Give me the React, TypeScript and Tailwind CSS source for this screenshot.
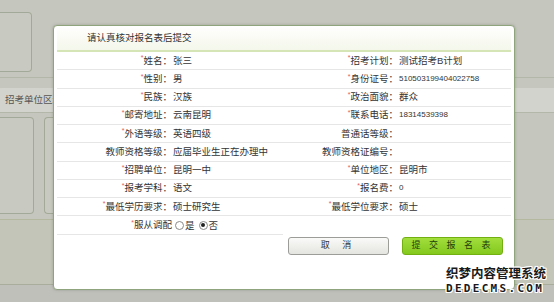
import React from 'react';

type Field = { label: string; value?: string; required?: boolean; num?: boolean };

const rows: [Field, Field][] = [
  [{ label: '姓名', value: '张三', required: true }, { label: '招考计划', value: '测试招考B计划', required: true }],
  [{ label: '性别', value: '男', required: true }, { label: '身份证号', value: '510503199404022758', required: true, num: true }],
  [{ label: '民族', value: '汉族', required: true }, { label: '政治面貌', value: '群众', required: true }],
  [{ label: '邮寄地址', value: '云南昆明', required: true }, { label: '联系电话', value: '18314539398', required: true, num: true }],
  [{ label: '外语等级', value: '英语四级', required: true }, { label: '普通话等级' }],
  [{ label: '教师资格等级', value: '应届毕业生正在办理中' }, { label: '教师资格证编号' }],
  [{ label: '招聘单位', value: '昆明一中', required: true }, { label: '单位地区', value: '昆明市', required: true }],
  [{ label: '报考学科', value: '语文', required: true }, { label: '报名费', value: '0', required: true, num: true }],
  [{ label: '最低学历要求', value: '硕士研究生', required: true }, { label: '最低学位要求', value: '硕士', required: true }],
];

function Label({ f, colon = true }: { f: Field; colon?: boolean }) {
  return (
    <div className="flex items-center justify-end whitespace-nowrap text-[#333]">
      {f.required && <span className="relative -top-[2px] text-[7px] text-[#e06060]">*</span>}
      <span>
        {f.label}
        {colon ? '：' : ''}
      </span>
    </div>
  );
}

function Value({ f }: { f: Field }) {
  return (
    <div className={`flex items-center whitespace-nowrap pl-[1px] text-[#333] ${f.num ? 'text-[8px]' : ''}`}>
      {f.value}
    </div>
  );
}

function Radio({ checked }: { checked?: boolean }) {
  return (
    <span className="mr-[1px] flex h-[9px] w-[9px] items-center justify-center rounded-full border border-[#8a8a8a] bg-white">
      {checked && <span className="h-[4px] w-[4px] rounded-full bg-[#222]" />}
    </span>
  );
}

export default function App() {
  return (
    <div className="relative h-[302px] w-[554px] overflow-hidden bg-[#c5c6be] font-['Liberation_Sans','Noto_Sans_CJK_SC',sans-serif] text-[9.5px]">
      {/* page behind the dialog */}
      <div className="flex flex-col">
        <div className="h-[12px]" />
        <div className="h-[60px] w-[32px] rounded-r-[4px] border border-l-0 border-[#a3a998] bg-[#c8cac1]" />
        <div className="h-[5px]" />
        <div className="h-[11px] border-t border-[#b3b7a9]" />
        <div className="flex h-[25px] items-center border-b border-[#b3b7a9] bg-[#d2d3cd] pl-[5px] text-[#555]">
          招考单位区域
        </div>
        <div className="flex h-[106px] gap-[10px] pt-[4px]">
          <div className="h-[97px] w-[34px] rounded-r-[4px] border border-l-0 border-[#a3a998] bg-[#c8cac1]" />
          <div className="h-[97px] w-[60px] rounded-l-[4px] border border-r-0 border-[#a3a998] bg-[#c8cac1]" />
        </div>
        <div className="h-[65px] border-t border-[#b3b89f] bg-[#c2c5b8]" />
        <div className="h-[20px] border-t border-[#a9ae9c] bg-[#bfc0ba]" />
      </div>

      {/* dialog */}
      <div className="absolute left-[53px] top-[25px] flex h-[265px] w-[462px] flex-col rounded-[4px] border border-[#8fa37c] bg-white px-[3px] shadow-[0_0_3px_rgba(80,90,70,0.35)]">
        <div className="flex h-[26px] items-center border-b-2 border-[#d6e5b6] bg-gradient-to-b from-white to-[#f4f7ea] pl-[30px] text-[#333]">
          请认真核对报名表后提交
        </div>
        {rows.map(([l, r], i) => (
          <div
            key={i}
            className="grid h-[18.25px] grid-cols-[115px_111px_115px_113px] border-b border-[#e6e6e6]"
          >
            <Label f={l} />
            <Value f={l} />
            <Label f={r} />
            <Value f={r} />
          </div>
        ))}
        <div className="grid h-[18.5px] w-[226px] grid-cols-[115px_111px] border-b border-[#e6e6e6]">
          <Label f={{ label: '服从调配', required: true }} colon={false} />
          <div className="flex items-center pl-[3px] text-[#333]">
            <Radio />
            <span className="mr-[4px] translate-y-[1px]">是</span>
            <Radio checked />
            <span className="translate-y-[1px]">否</span>
          </div>
        </div>
        <div className="mt-[2px] flex gap-[13px] pl-[231px]">
          <button className="h-[18px] w-[101px] rounded-[3px] border border-[#9c9c98] bg-gradient-to-b from-[#fafaf8] to-[#e4e4e0] text-[9px] tracking-[5px] text-[#333]">
            取 消
          </button>
          <button className="h-[18px] w-[101px] rounded-[3px] border border-[#72b012] bg-gradient-to-b from-[#a2de3c] to-[#84c81c] text-[9px] tracking-[3px] text-[#24400a]">
            提 交 报 名 表
          </button>
        </div>
      </div>

      {/* watermark */}
      <div className="absolute left-[446px] top-[267px] flex flex-col items-start font-bold leading-none text-[#1a1a1a] [text-shadow:1px_0_#fff,-1px_0_#fff,0_1px_#fff,0_-1px_#fff,1px_1px_#fff,-1px_-1px_#fff,1px_-1px_#fff,-1px_1px_#fff]">
        <span className="text-[12.5px] font-['Noto_Sans_CJK_SC',sans-serif]">织梦内容管理系统</span>
        <span className="mt-[3px] text-[11px] tracking-[2.3px] font-['DejaVu_Sans_Mono',monospace]">DEDECMS.COM</span>
      </div>
    </div>
  );
}
